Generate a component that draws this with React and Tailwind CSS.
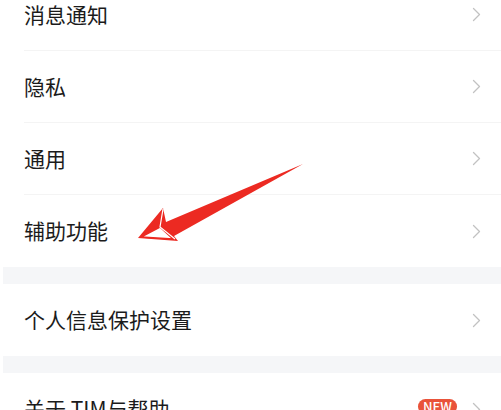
const ROWS_TOP = ['消息通知', '隐私', '通用', '辅助功能']

function Chevron() {
  return (
    <svg width="9" height="15" viewBox="0 0 9 15" fill="none" className="shrink-0">
      <path d="M1.5 1.5 L7.5 7.5 L1.5 13.5" stroke="#c2c2c2" strokeWidth="1.3" strokeLinecap="round" strokeLinejoin="round" />
    </svg>
  )
}

function Row({ label, last, badge }) {
  return (
    <div className="flex h-[72px] items-center pl-6">
      <div className={`flex h-full flex-1 items-center pr-5 ${last ? '' : 'border-b border-[#f4f4f4]'}`}>
        <span className="flex-1 text-[21px] text-[#1b1b1b]">{label}</span>
        {badge && (
          <span className="-mt-[5px] mr-[15px] rounded-full bg-[#e9533a] px-[5px] text-[13px] font-medium leading-[15px] text-white">
            NEW
          </span>
        )}
        <Chevron />
      </div>
    </div>
  )
}

function Gap() {
  return <div className="ml-[3px] h-[17px] bg-[#f5f6f8]" />
}

function RedArrow() {
  return (
    <svg className="pointer-events-none absolute left-0 top-0" width="501" height="410" viewBox="0 0 501 410">
      <polygon
        points="138,238 163,208 166,222 303,164 174,236 178,241"
        fill="#ec2a22"
      />
      <polygon points="141,237 160,227 173,239" fill="#ffffff" stroke="#ec2a22" strokeWidth="1.5" strokeLinejoin="round" />
      <polyline points="163,209 160,227 175,239" fill="none" stroke="#ffffff" strokeWidth="1.2" />
    </svg>
  )
}

export default function App() {
  return (
    <div
      className="relative h-[410px] w-[501px] overflow-hidden bg-white"
      style={{ fontFamily: '"Noto Sans CJK SC", "Noto Sans", sans-serif' }}
    >
      <div className="-mt-[21px]">
        {ROWS_TOP.map((label, i) => (
          <Row key={label} label={label} last={i === ROWS_TOP.length - 1} />
        ))}
        <Gap />
        <Row label="个人信息保护设置" last />
        <Gap />
        <Row label="关于 TIM与帮助" last badge />
      </div>
      <RedArrow />
    </div>
  )
}
